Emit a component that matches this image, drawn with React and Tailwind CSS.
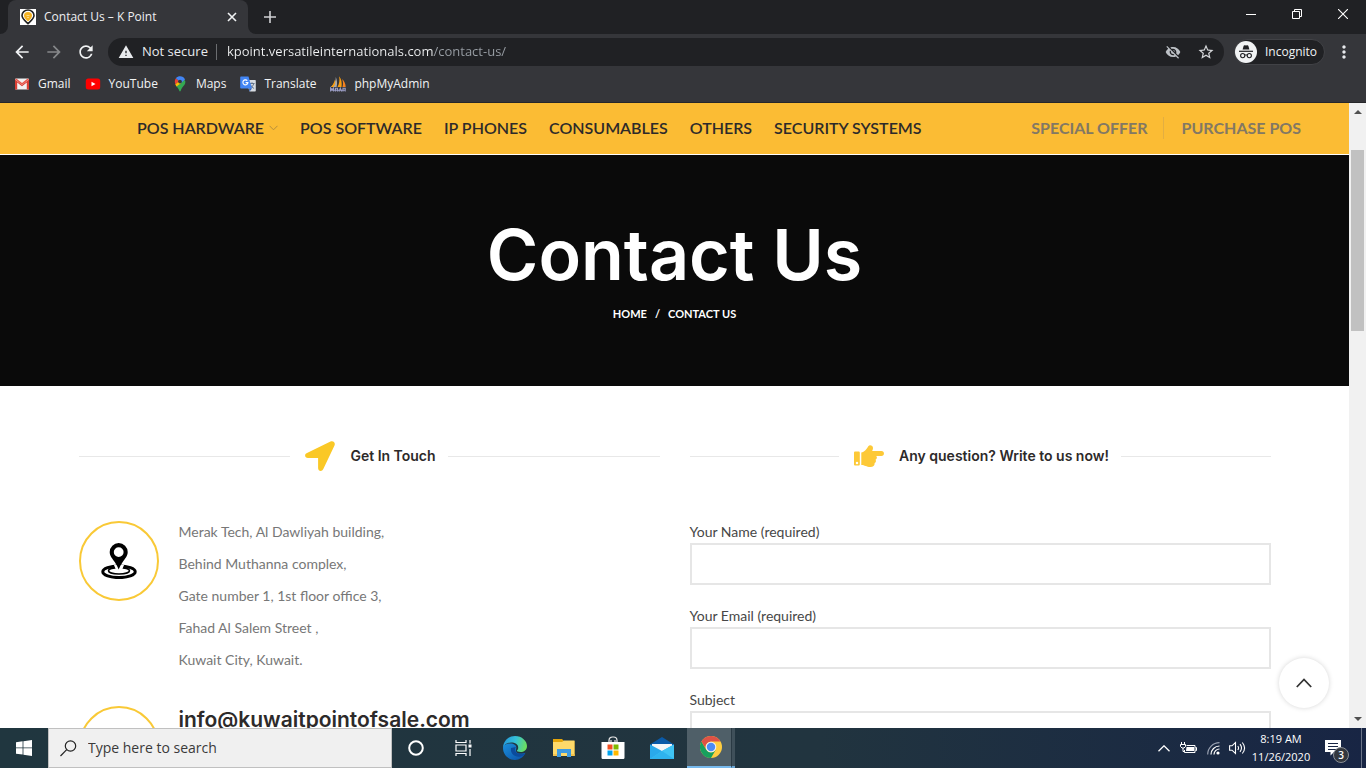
import React, { useState } from "react";
import {
  MdArrowBack,
  MdArrowForward,
  MdRefresh,
  MdWarning,
  MdVisibilityOff,
  MdStarBorder,
  MdMoreVert,
} from "react-icons/md";

const UI = "font-['Open_Sans','Noto_Sans',sans-serif]";
const HEADING = "font-['Inter','Liberation_Sans',sans-serif]";

/* ---------- Browser icons ---------- */

function FaviconIcon() {
  return (
    <svg viewBox="0 0 16 16" className="size-4 shrink-0" aria-hidden="true">
      <rect width="16" height="16" fill="#fff" />
      <path d="M8 14.6C5.200 12 2 9.800 2 6.600A6 5.600 0 0 1 14 6.600C14 9.800 10.800 12 8 14.600Z" fill="none" stroke="#222" strokeWidth="1.600" />
      <path d="M8 12.500C6 10.500 4 9 4 6.800A4 3.700 0 0 1 12 6.800C12 9 10 10.500 8 12.500Z" fill="#f5b324" />
      <path d="M6.500 6.500h3M7 8.500h2" stroke="#fbe3a4" strokeWidth="0.800" />
    </svg>
  );
}

function GmailIcon() {
  return (
    <svg viewBox="0 0 16 16" className="size-4" aria-hidden="true">
      <rect x="1" y="2.500" width="14" height="11" rx="1" fill="#f2f2f2" />
      <path d="M1 13.500V3.500L8 9l7-5.500v10h-2.200V6.600L8 10.300 3.200 6.600v6.900Z" fill="#d93f34" />
      <path d="M1 3.300 2.300 2.500 8 7l5.700-4.500L15 3.300 8 9Z" fill="#e8584d" />
    </svg>
  );
}

function YouTubeIcon() {
  return (
    <svg viewBox="0 0 16 16" className="size-4" aria-hidden="true">
      <rect x="0.800" y="2.500" width="14.400" height="11" rx="2.500" fill="#f00" />
      <path d="M6.500 5.700v4.600l4-2.300Z" fill="#fff" />
    </svg>
  );
}

function MapsIcon() {
  return (
    <svg viewBox="0 0 16 16" className="size-4" aria-hidden="true">
      <path d="M4 9.800 11.800 3 13.300 5.300C13.800 9 10 10.500 8.800 14.500Q8 16.500 7.200 14.500C6.500 12.300 5 11.200 4 9.800Z" fill="#34a853" />
      <path d="M3.900 2.300 7 4.800 3.700 8.800C2.300 6.500 2.600 4 3.900 2.300Z" fill="#ea4335" />
      <path d="M3.900 2.300C6.500-.8 11.500-.2 13 3.500L8.500 7.500 6.500 4.500Z" fill="#4285f4" />
      <path d="M6.300 5.700 3.300 8.500 4.500 10.500 9.200 7Z" fill="#fbbc04" />
      <circle cx="8" cy="5.600" r="1.900" fill="#35363a" />
    </svg>
  );
}

function TranslateIcon() {
  return (
    <svg viewBox="0 0 16 16" className="size-4" aria-hidden="true">
      <path d="M6 4h9a.8.8 0 0 1 .8.800v10a.8.8 0 0 1-.8.800H9.500Z" fill="#d8dce2" />
      <path d="M9.500 7.500h5M12 6.300v1.200M13.800 7.600c-.6 2-2 3.700-3.800 4.700M10.500 9c.8 1.500 2 2.700 3.600 3.500" stroke="#64748b" strokeWidth="1" fill="none" />
      <path d="M1 .5h7.500L12 12.500H1a.8.8 0 0 1-.8-.8V1.300A.8.800 0 0 1 1 .5Z" fill="#4285f4" />
      <path d="M7.300 4.700A2.500 2.500 0 1 0 7.900 6.600H5.600" fill="none" stroke="#fff" strokeWidth="1.100" />
      <path d="M9.500 15.600 9 12.500h3Z" fill="#2a5db8" />
    </svg>
  );
}

function PhpMyAdminIcon() {
  return (
    <svg viewBox="0 0 16 16" className="size-4" aria-hidden="true">
      <path d="M5.800 1C6 5 4 8.500 1 11h5.600C7.500 8 7.200 4 5.800 1Z" fill="#a9a9a9" />
      <path d="M9 .3C10 4 9.300 8 7.500 11h4C12.200 7 11.500 3 9 .3Z" fill="#f89c0e" />
      <path d="M12 3c1.300 2.500 1.300 5.500.500 8h3.200C15.500 7.500 14.300 5 12 3Z" fill="#f58220" />
      <path d="M5 3.500C4 7 2.500 9.500 .8 11h2.700C5 9 5.500 6.500 5 3.500Z" fill="#f89c0e" />
      <path d="M.6 15.500V12l1.500 1.600L3.600 12v3.500M5.500 15.500V12.300h2v3.200M9 15.500l1.300-3.200 1.300 3.200M13 15.500v-3.200h2.200v3.200M.6 14.300h14.600" fill="none" stroke="#9a9cc4" strokeWidth="1.100" />
    </svg>
  );
}

function IncognitoIcon() {
  return (
    <svg viewBox="0 0 22 22" className="size-[22px]" aria-hidden="true">
      <circle cx="11" cy="11" r="11" fill="#f1f3f4" />
      <path d="M7.600 8.600 8.600 4.900c.2-.7.8-.9 1.400-.6l1 .3 1-.3c.6-.3 1.200-.1 1.400.6l1 3.700Z" fill="#202124" />
      <path d="M4 10.300h14" stroke="#202124" strokeWidth="1.200" />
      <circle cx="7.700" cy="14.600" r="2.100" fill="none" stroke="#202124" strokeWidth="1.100" />
      <circle cx="14.300" cy="14.600" r="2.100" fill="none" stroke="#202124" strokeWidth="1.100" />
      <path d="M9.800 14.200q1.200-.7 2.400 0" fill="none" stroke="#202124" strokeWidth="1" />
    </svg>
  );
}

/* ---------- Browser chrome ---------- */

function TabStrip() {
  return (
    <div className="flex h-[34px] items-stretch bg-[#202124]">
      <div className="flex w-2 items-end bg-[#35363a]">
        <span className="h-full w-full rounded-br-lg bg-[#202124]" />
      </div>
      <div className="flex w-60 items-center rounded-t-lg bg-[#35363a] pr-[10px] pl-3">
        <FaviconIcon />
        <span className="ml-2 grow truncate text-xs text-[#eeeff1]">Contact Us – K Point</span>
        <button type="button" aria-label="Close tab" className="flex size-3 items-center justify-center">
          <svg viewBox="0 0 12 12" className="size-3">
            <path d="m2 2 8 8m0-8-8 8" stroke="#f1f3f4" strokeWidth="1.600" />
          </svg>
        </button>
      </div>
      <div className="flex w-2 items-end bg-[#35363a]">
        <span className="h-full w-full rounded-bl-lg bg-[#202124]" />
      </div>
      <button type="button" aria-label="New tab" className="flex w-7 items-center justify-center">
        <svg viewBox="0 0 12 12" className="size-3">
          <path d="M6 0v12M0 6h12" stroke="#d0d1d4" strokeWidth="1.600" />
        </svg>
      </button>
      <div className="ml-auto flex h-7 items-stretch">
        <button type="button" aria-label="Minimize" className="flex w-[46px] items-center justify-center">
          <svg viewBox="0 0 10 10" className="size-[10px]"><path d="M0 5.500h10" stroke="#fff" /></svg>
        </button>
        <button type="button" aria-label="Restore" className="flex w-[46px] items-center justify-center">
          <svg viewBox="0 0 10 10" className="size-[10px]">
            <path d="M.5 2.500h7v7h-7ZM2.500 2.500v-2h7v7h-2" fill="none" stroke="#fff" />
          </svg>
        </button>
        <button type="button" aria-label="Close" className="flex w-[46px] items-center justify-center">
          <svg viewBox="0 0 10 10" className="size-[10px]"><path d="m0 0 10 10M10 0 0 10" stroke="#fff" strokeWidth="1.100" /></svg>
        </button>
      </div>
    </div>
  );
}

function AddressBar() {
  const [url, setUrl] = useState("kpoint.versatileinternationals.com/contact-us/");
  return (
    <div className="flex h-9 items-center bg-[#35363a] pr-3 pl-3">
      <button type="button" aria-label="Back" className="mr-3 text-[#f1f3f4]"><MdArrowBack className="size-5" /></button>
      <button type="button" aria-label="Forward" className="mr-3 text-[#86888a]"><MdArrowForward className="size-5" /></button>
      <button type="button" aria-label="Reload" className="mr-3 text-[#f1f3f4]"><MdRefresh className="size-5" /></button>
      <div className="flex h-7 grow items-center rounded-full bg-[#202124] pr-[9px] pl-[10px]">
        <MdWarning className="size-4 text-[#e8eaed]" />
        <span className="ml-2 text-[13px] text-[#e8eaed]">Not secure</span>
        <span className="mr-[10px] ml-2 h-4 w-px bg-[#6b6d70]" />
        <input
          aria-label="Address"
          value={url}
          onChange={(e) => setUrl(e.target.value)}
          className="min-w-0 grow bg-[linear-gradient(to_right,#f1f3f4_207px,#9aa0a6_207px)] bg-clip-text text-[13px] text-transparent outline-none"
        />
        <button type="button" aria-label="Third-party cookies blocked" className="text-[#bdc1c6]"><MdVisibilityOff className="size-4" /></button>
        <button type="button" aria-label="Bookmark this page" className="ml-4 text-[#d5d7da]"><MdStarBorder className="size-[18px]" /></button>
      </div>
      <button type="button" className="ml-[10px] flex h-[26px] w-[91px] items-center rounded-full border border-[#414246] bg-[#202124] text-xs text-[#f1f3f4]">
        <IncognitoIcon />
        <span className="ml-2">Incognito</span>
      </button>
      <button type="button" aria-label="Menu" className="ml-[9px] text-[#e8eaed]"><MdMoreVert className="size-5" /></button>
    </div>
  );
}

function BookmarksBar() {
  const item = "flex items-center gap-2";
  return (
    <nav aria-label="Bookmarks" className="flex h-[33px] items-center gap-[14px] border-b border-[#26272a] bg-[#35363a] pb-1 pl-[14px] text-xs text-[#f1f3f4]">
      <a href="#gmail" className={item}><GmailIcon />Gmail</a>
      <a href="#youtube" className={item}><YouTubeIcon />YouTube</a>
      <a href="#maps" className={item}><MapsIcon />Maps</a>
      <a href="#translate" className={item}><TranslateIcon />Translate</a>
      <a href="#phpmyadmin" className={item}><PhpMyAdminIcon />phpMyAdmin</a>
    </nav>
  );
}

/* ---------- Web page ---------- */

function SiteNav() {
  return (
    <header className="flex h-[52px] shrink-0 items-center border-b border-white bg-[#fbbc34] pr-12 pb-[2px] pl-[137px] font-['Lato','Liberation_Sans',sans-serif] text-base whitespace-nowrap">
      <nav aria-label="Categories" className="flex items-center gap-[22px] font-semibold text-[#2d2a2a]">
        <a href="#hardware" className="flex items-center gap-[5px]">
          POS HARDWARE
          <svg viewBox="0 0 9 6" className="h-[6px] w-[9px]" aria-hidden="true">
            <path d="m.5.8 4 4 4-4" fill="none" stroke="#b58e3d" />
          </svg>
        </a>
        <a href="#software">POS SOFTWARE</a>
        <a href="#phones">IP PHONES</a>
        <a href="#consumables">CONSUMABLES</a>
        <a href="#others">OTHERS</a>
        <a href="#security">SECURITY SYSTEMS</a>
      </nav>
      <nav aria-label="Offers" className="ml-auto flex items-center font-bold text-[#827864]">
        <a href="#offer">SPECIAL OFFER</a>
        <span className="mr-[18px] ml-[15px] h-[22px] w-px bg-[#e2ae42]" />
        <a href="#purchase">PURCHASE POS</a>
      </nav>
    </header>
  );
}

function Hero() {
  return (
    <section className="flex shrink-0 flex-col items-center bg-[#0a0a0a] pt-[60px] pb-[62px] text-white">
      <h1 className={`${HEADING} text-[70px] leading-[80px] font-semibold`}>Contact Us</h1>
      <nav aria-label="Breadcrumb" className="mt-[9px] flex gap-2 text-[11px] leading-5 font-bold">
        <a href="#home">HOME</a>
        <span>/</span>
        <span>CONTACT US</span>
      </nav>
    </section>
  );
}

function SectionTitle({ icon, children }) {
  return (
    <div className="mb-[50px] flex h-[30px] items-center">
      <span className="h-px grow bg-[#e8e8e8]" />
      <span className="mx-[15px]">{icon}</span>
      <h2 className={`${HEADING} text-sm font-semibold text-[#2d2a2a]`}>{children}</h2>
      <span className="ml-3 h-px grow bg-[#e8e8e8]" />
    </div>
  );
}

function ArrowIcon() {
  return (
    <svg viewBox="0 0 30 30" className="size-[30px]" aria-hidden="true">
      <path d="M2 12 25.500.5c2.700-1.200 5.200 1.200 4 4L18.300 28c-1.300 3-5.200 2.300-5.200-1V17H3C-.3 17-1 13.300 2 12Z" fill="#fac826" />
    </svg>
  );
}

function HandIcon() {
  return (
    <svg viewBox="0 0 30 30" className="size-[30px]" aria-hidden="true">
      <path fillRule="evenodd" d="M1.300 10.500h3.200c.8 0 1.300.5 1.300 1.300v11.400c0 .8-.5 1.300-1.300 1.300H1.300C.5 24.500 0 24 0 23.200V11.800c0-.8.5-1.300 1.300-1.300Zm1.700 10.300a1.200 1.200 0 1 0 0 2.500 1.200 1.200 0 0 0 0-2.500Z" fill="#fdc937" />
      <path d="M7.300 11.500c3.200-.4 5.500-3.500 7-6.300C15.300 3.300 19 4 19 7c0 1.200-.5 2.200-.8 2.900h9.200c3.400 0 3.400 5 0 5h-5.200c1.200 1.300.8 3-.6 3.700.7 1.400.2 2.800-1 3.300.3 3-1.200 4.100-4.100 4.100-4.300 0-5.700-2-9.200-2Z" fill="#fdc937" />
    </svg>
  );
}

function LocationIcon() {
  return (
    <svg viewBox="0 0 36 36" className="size-9" aria-hidden="true">
      <ellipse cx="18" cy="28.800" rx="16.200" ry="5.800" fill="none" stroke="#000" strokeWidth="3" />
      <ellipse cx="18" cy="27.800" rx="10.500" ry="3.200" fill="none" stroke="#000" strokeWidth="1.600" />
      <path d="M13 22h10l-2 5-3 2-3-2Z" fill="#fff" />
      <path fillRule="evenodd" d="M17.700 0a9 9 0 0 1 9 9c0 4-2.600 6.500-5 10-1.700 2.600-3.100 5-4 7.500-.9-2.500-2.300-4.900-4-7.500-2.400-3.500-5-6-5-10a9 9 0 0 1 9-9Zm0 4.200a4.900 4.900 0 1 0 0 9.800 4.900 4.900 0 0 0 0-9.800Z" fill="#000" />
    </svg>
  );
}

const ADDRESS = [
  "Merak Tech, Al Dawliyah building,",
  "Behind Muthanna complex,",
  "Gate number 1, 1st floor office 3,",
  "Fahad Al Salem Street ,",
  "Kuwait City, Kuwait.",
];

const FIELDS = [
  { id: "name", label: "Your Name (required)", type: "text" },
  { id: "email", label: "Your Email (required)", type: "email" },
  { id: "subject", label: "Subject", type: "text" },
];

function ContactSection() {
  const circle = "flex size-20 shrink-0 items-center justify-center rounded-full border-2 border-[#f9c936]";
  return (
    <section className="mx-auto grid w-full max-w-[1192px] grid-cols-2 gap-[30px] pt-[55px]">
      <div>
        <SectionTitle icon={<ArrowIcon />}>Get In Touch</SectionTitle>
        <div className="flex gap-5">
          <span className={circle}><LocationIcon /></span>
          <address className="-mt-[5px] text-sm leading-8 text-[#777] not-italic">
            {ADDRESS.map((line) => <p key={line}>{line}</p>)}
          </address>
        </div>
        <div className="mt-[30px] flex gap-5">
          <span className={circle} />
          <a href="mailto:info@kuwaitpointofsale.com" className={`${HEADING} text-[21px] leading-7 font-semibold text-[#2d2a2a]`}>
            info@kuwaitpointofsale.com
          </a>
        </div>
      </div>
      <div>
        <SectionTitle icon={<HandIcon />}>Any question? Write to us now!</SectionTitle>
        <form className="flex flex-col gap-5">
          {FIELDS.map((f) => (
            <div key={f.id} className="flex flex-col">
              <label htmlFor={f.id} className="text-sm leading-[22px] text-[#474747]">{f.label}</label>
              <input id={f.id} type={f.type} className="h-[42px] border-2 border-[#e6e6e6] px-3 text-sm" />
            </div>
          ))}
        </form>
      </div>
    </section>
  );
}

function Scrollbar() {
  return (
    <div className="flex w-[17px] shrink-0 flex-col items-center bg-[#f1f1f1]" aria-hidden="true">
      <svg viewBox="0 0 17 17" className="size-[17px]"><path d="m5 11 4-4 4 4Z" fill="#505050" /></svg>
      <span className="mt-[30px] h-[181px] w-[13px] bg-[#c1c1c1]" />
      <svg viewBox="0 0 17 17" className="mt-auto size-[17px]"><path d="m5 6 4 4 4-4Z" fill="#505050" /></svg>
    </div>
  );
}

/* ---------- Taskbar ---------- */

function EdgeIcon() {
  return (
    <svg viewBox="0 0 24 24" className="size-6" aria-hidden="true">
      <defs>
        <linearGradient id="edge-top" x1="0" y1="0.300" x2="1" y2="0.500">
          <stop offset="0" stopColor="#2497dc" />
          <stop offset="0.500" stopColor="#35c1d8" />
          <stop offset="1" stopColor="#6de05c" />
        </linearGradient>
        <linearGradient id="edge-low" x1="0" y1="0" x2="1" y2="1">
          <stop offset="0" stopColor="#1b8fdc" />
          <stop offset="1" stopColor="#0a4fa5" />
        </linearGradient>
      </defs>
      <path d="M0 12C0 9 3.500 7.500 7.500 7.500c4 0 7 2.500 5.500 6-1 5 6 4.500 9.500 3.300C20.500 21 16.500 24 12 24 5.400 24 0 18.600 0 12Z" fill="url(#edge-low)" />
      <path d="M8 12c-1 6 4 9.500 9.500 8.500 2-.5 3.500-1.500 4.700-3C19 18.700 13 18.500 12 14c-.3-1.500.5-2.500 1-3Z" fill="#0b4b9c" />
      <path d="M0 11.500C.5 5 5.500 0 12 0c7 0 12 5 12 10 0 4-3.200 6-6.500 6-2.500 0-4-.7-3.500-1.500 1-1 1.200-2 1.200-3 0-3.200-3.200-5-7-5C4.500 6.500 1.500 8.500 0 11.500Z" fill="url(#edge-top)" />
    </svg>
  );
}

function FolderIcon() {
  return (
    <svg viewBox="0 0 22 20" className="h-5 w-[22px]" aria-hidden="true">
      <path d="M0 1h9l2 2h10.500v15H0Z" fill="#e5a50a" />
      <path d="M0 4h9l2-1.500h10.500V18H0Z" fill="#fed96a" />
      <path d="M4 11h14v8h-4v-4H8v4H4Z" fill="#3f9be0" />
      <path d="M0 16h4v2H0ZM18 16h3.500v2H18Z" fill="#f4c34d" />
    </svg>
  );
}

function StoreIcon() {
  return (
    <svg viewBox="0 0 24 24" className="size-6" aria-hidden="true">
      <path d="M8 7V4.500C8 1 11 1 11.500 1h1C13 1 16 1 16 4.500V7M10 6V4M14 6V4" fill="none" stroke="#e8e8e8" strokeWidth="1.200" />
      <path d="M.5 6h23v15.500c0 1-.7 1.500-1.500 1.500H2c-.8 0-1.500-.5-1.500-1.500Z" fill="#fff" />
      <path d="M6.500 8.500h5v5h-5Z" fill="#f25022" /><path d="M12.500 8.500h5v5h-5Z" fill="#7fba00" />
      <path d="M6.500 14.500h5v5h-5Z" fill="#00a4ef" /><path d="M12.500 14.500h5v5h-5Z" fill="#ffb900" />
    </svg>
  );
}

function MailIcon() {
  return (
    <svg viewBox="0 0 24 22" className="h-[22px] w-6" aria-hidden="true">
      <path d="M0 7.500 12 0l12 7.500V22H0Z" fill="#0a5aa8" />
      <path d="M2 7h20v3l-10 5L2 10Z" fill="#f4f6f8" />
      <path d="M0 7.500 12 14l12-6.500V22H0Z" fill="#2aa9ea" />
      <path d="M24 7.500V22H0l12-8Z" fill="#40c4f4" />
      <path d="M24 22H0l12-8Z" fill="#2fb3ee" />
    </svg>
  );
}

function ChromeIcon() {
  return (
    <svg viewBox="0 0 24 24" className="size-[22px]" aria-hidden="true">
      <circle cx="12" cy="12" r="12" fill="#ffcd40" />
      <path d="M1.600 6A12 12 0 0 0 12 24l5.200-9A6 6 0 0 1 6.800 15Z" fill="#17a05e" />
      <path d="M1.600 6A12 12 0 0 1 22.400 6H12A6 6 0 0 0 6.800 15Z" fill="#de5246" />
      <circle cx="12" cy="12" r="5.800" fill="#f1f1f1" />
      <circle cx="12" cy="12" r="4.600" fill="#4c8bf5" />
    </svg>
  );
}

function Taskbar() {
  const app = "flex w-[47px] items-center justify-center";
  return (
    <footer className="flex h-10 shrink-0 items-stretch bg-linear-to-r from-[#20363f] via-[#21343f] via-60% to-[#182544] text-white">
      <button type="button" aria-label="Start" className="flex w-12 items-center justify-center">
        <svg viewBox="0 0 16 16" className="size-4">
          <path d="M0 2.200 6.600 1.300v6.200H0ZM7.400 1.200 16 0v7.500H7.400ZM0 8.300h6.600v6.300L0 13.700ZM7.400 8.300H16V16l-8.600-1.300Z" fill="#fff" />
        </svg>
      </button>
      <label className="flex w-[344px] items-center border border-[#c0c0c0] bg-[#f0f0f0] pl-[11px]">
        <svg viewBox="0 0 17 17" className="size-[17px] shrink-0" aria-hidden="true">
          <circle cx="10.500" cy="6" r="5.200" fill="none" stroke="#222" strokeWidth="1.200" />
          <path d="M6.700 9.700.5 16" stroke="#222" strokeWidth="1.200" />
        </svg>
        <input type="text" aria-label="Search" placeholder="Type here to search" className="ml-[11px] min-w-0 grow bg-transparent text-sm text-[#333] outline-none placeholder:text-[#3a3a3a]" />
      </label>
      <button type="button" aria-label="Cortana" className="flex w-12 items-center justify-center">
        <svg viewBox="0 0 16 16" className="size-4"><circle cx="8" cy="8" r="6.800" fill="none" stroke="#fff" strokeWidth="2" /></svg>
      </button>
      <button type="button" aria-label="Task view" className={app}>
        <svg viewBox="0 0 17 16" className="h-4 w-[17px]">
          <path d="M1 0v2.500h10V0M1 5h10v6H1ZM1 16v-2.500h10V16M15 0v3.500M15 9v7" fill="none" stroke="#fff" strokeWidth="1.200" />
          <rect x="13.500" y="4.500" width="3" height="3" fill="#fff" />
        </svg>
      </button>
      <div className="ml-1 flex gap-[2px]">
        <button type="button" aria-label="Edge" className={app}><EdgeIcon /></button>
        <button type="button" aria-label="File Explorer" className={app}><FolderIcon /></button>
        <button type="button" aria-label="Store" className={app}><StoreIcon /></button>
        <button type="button" aria-label="Mail" className={app}><MailIcon /></button>
        <div className="flex">
          <button type="button" aria-label="Chrome" className="flex w-11 items-center justify-center border-b-2 border-[#76b9ed] bg-[#4f5f68] pl-1">
            <ChromeIcon />
          </button>
          <span className="w-1 border-b-2 border-l border-b-[#6ba6d4] border-l-[#2a3a44] bg-[#3f505a]" />
        </div>
      </div>
      <div className="ml-auto flex items-center">
        <button type="button" aria-label="Show hidden icons" className="mr-[10px]">
          <svg viewBox="0 0 12 7" className="h-[7px] w-3"><path d="m.5 6.300 5.500-5.500 5.500 5.500" fill="none" stroke="#fff" strokeWidth="1.300" /></svg>
        </button>
        <button type="button" aria-label="Battery" className="mr-[10px]">
          <svg viewBox="0 0 17 12" className="h-3 w-[17px]">
            <path d="M6.500 3.500H15v7H4.500V8M15.500 5.500h1v3h-1" fill="none" stroke="#fff" />
            <path d="M6.500 5H14v4H6Z" fill="#fff" />
            <path d="M1.500 0v2M4.500 0v2M.5 2.500h5v2l-1.500 1.500h-2L.5 4.500ZM3 6v3.500h2" fill="none" stroke="#fff" />
          </svg>
        </button>
        <button type="button" aria-label="Network" className="mr-[9px]">
          <svg viewBox="0 0 13 13" className="size-[13px]">
            <path d="M.7 12.500A11.800 11.800 0 0 1 12.500.7" fill="none" stroke="#9aa2b2" strokeWidth="1.200" />
            <path d="M4 12.500A8.500 8.500 0 0 1 12.500 4M7 12.500A5.500 5.500 0 0 1 12.500 7" fill="none" stroke="#fff" strokeWidth="1.200" />
            <circle cx="11" cy="11" r="1.600" fill="#fff" />
          </svg>
        </button>
        <button type="button" aria-label="Volume" className="mr-[5px]">
          <svg viewBox="0 0 17 14" className="h-[14px] w-[17px]">
            <path d="M.6 4.800h2.400L6.500 1.500v11L3 9.200H.6Z" fill="none" stroke="#fff" strokeWidth="1.100" />
            <path d="M8.800 5q1.500 2 0 4M11 3.200q3 3.800 0 7.600M13.300 1.500q4.600 5.500 0 11" fill="none" stroke="#fff" strokeWidth="1.100" />
          </svg>
        </button>
        <div className="w-[60px] text-center text-[11px] leading-[18px] whitespace-nowrap">
          <p>8:19 AM</p>
          <p>11/26/2020</p>
        </div>
        <button type="button" aria-label="Notifications" className="relative mr-3 ml-[14px] h-6 w-6">
          <svg viewBox="0 0 24 24" className="size-6" aria-hidden="true">
            <path d="M0 4h16v12h-7l-3.500 3.500V16H0Z" fill="#fff" />
            <path d="M3 7.500h10M3 10.500h10M3 13.500h10" stroke="#182544" />
          </svg>
          <span className="absolute top-[11px] left-2 flex size-4 items-center justify-center rounded-full border border-[#8a8f96] bg-[#33373e] text-[10px] leading-none font-semibold">3</span>
        </button>
        <span className="mr-1 h-full w-px bg-[#6b7488]" />
      </div>
    </footer>
  );
}

export default function App() {
  return (
    <div className={`${UI} flex h-screen flex-col overflow-hidden bg-white`}>
      <div className="shrink-0">
        <TabStrip />
        <AddressBar />
        <BookmarksBar />
      </div>
      <div className="flex min-h-0 grow">
        <main className="relative flex min-w-0 grow flex-col overflow-hidden bg-white font-['Lato','Liberation_Sans',sans-serif]">
          <SiteNav />
          <Hero />
          <ContactSection />
          <button type="button" aria-label="Scroll to top" className="absolute right-5 bottom-5 flex size-[50px] items-center justify-center rounded-full bg-white shadow-[0_0_5px_rgba(0,0,0,0.17)]">
            <svg viewBox="0 0 16 10" className="h-[10px] w-4"><path d="m.8 9 7.200-7.500L15.200 9" fill="none" stroke="#333" strokeWidth="1.800" /></svg>
          </button>
        </main>
        <Scrollbar />
      </div>
      <Taskbar />
    </div>
  );
}
